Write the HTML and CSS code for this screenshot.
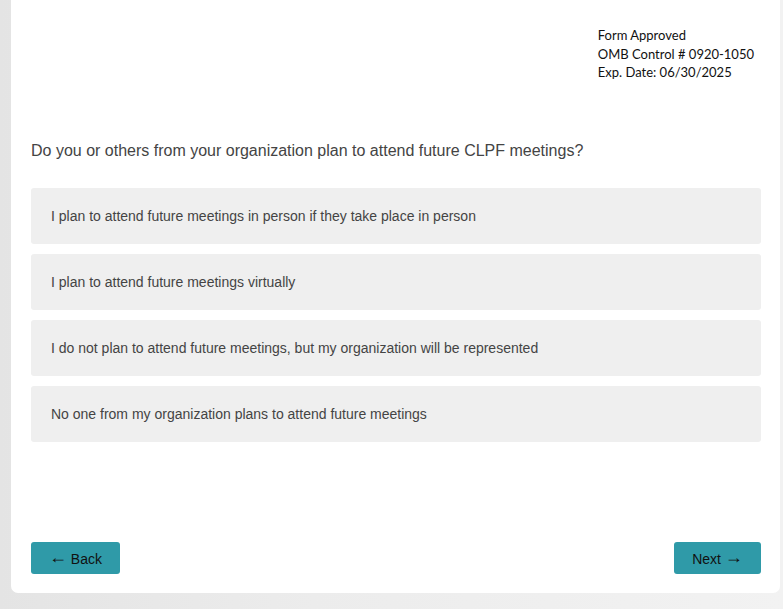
FILE: index.html
```html
<!DOCTYPE html>
<html lang="en">
<head>
    <meta charset="UTF-8">
    <meta name="viewport" content="width=device-width, initial-scale=1.0">
    <title>CLPF Meeting Survey</title>
    <link rel="stylesheet" href="styles.css">
</head>
<body>
    <div class="survey-card">
        <div class="omb-box">
            <div>Form Approved</div>
            <div>OMB Control # 0920-1050</div>
            <div>Exp. Date: 06/30/2025</div>
        </div>

        <h2 class="question">Do you or others from your organization plan to attend future CLPF meetings?</h2>

        <div class="choices">
            <div class="choice">I plan to attend future meetings in person if they take place in person</div>
            <div class="choice">I plan to attend future meetings virtually</div>
            <div class="choice">I do not plan to attend future meetings, but my organization will be represented</div>
            <div class="choice">No one from my organization plans to attend future meetings</div>
        </div>

        <div class="nav-buttons">
            <button class="nav-btn back-btn"><span class="arrow">&larr;</span> Back</button>
            <button class="nav-btn next-btn">Next <span class="arrow">&rarr;</span></button>
        </div>
    </div>
</body>
</html>
```

FILE: styles.css
```css
body {
    font-family: "Liberation Sans", Arial, sans-serif;
    background: linear-gradient(90deg, #e4e4e4 0%, #ececec 40%, #f2f2f2 100%);
    margin: 0;
    padding: 0 3px 0 11px;
    height: 609px;
    overflow: hidden;
}
.survey-card {
    background: #fff;
    height: 593px;
    border-radius: 0 0 7px 7px;
    padding: 0 19px 19px 20px;
    box-sizing: border-box;
    display: flex;
    flex-direction: column;
}
.omb-box {
    align-self: flex-end;
    margin-right: 7px;
    padding-top: 26px;
    font-family: Lato, "Open Sans", sans-serif;
    font-size: 13px;
    line-height: 18.5px;
    color: #111;
}
.question {
    font-size: 16px;
    font-weight: normal;
    color: #444;
    margin: 59px 0 27px;
    line-height: 20px;
}
.choices {
    display: flex;
    flex-direction: column;
    gap: 10px;
}
.choice {
    background: #efefef;
    border-radius: 3px;
    height: 56px;
    display: flex;
    align-items: center;
    padding-left: 20px;
    font-size: 14px;
    color: #444;
}
.nav-buttons {
    margin-top: auto;
    display: flex;
    justify-content: space-between;
}
.nav-btn {
    height: 32px;
    padding: 0;
    background-color: #2f9aa8;
    color: #111;
    border: none;
    border-radius: 3px;
    font-family: "Liberation Sans", Arial, sans-serif;
    font-size: 14px;
    line-height: 14px;
    cursor: pointer;
}
.arrow {
    font-size: 18px;
    line-height: 14px;
    vertical-align: 1px;
}
.back-btn {
    width: 89px;
}
.next-btn {
    width: 87px;
}
```
